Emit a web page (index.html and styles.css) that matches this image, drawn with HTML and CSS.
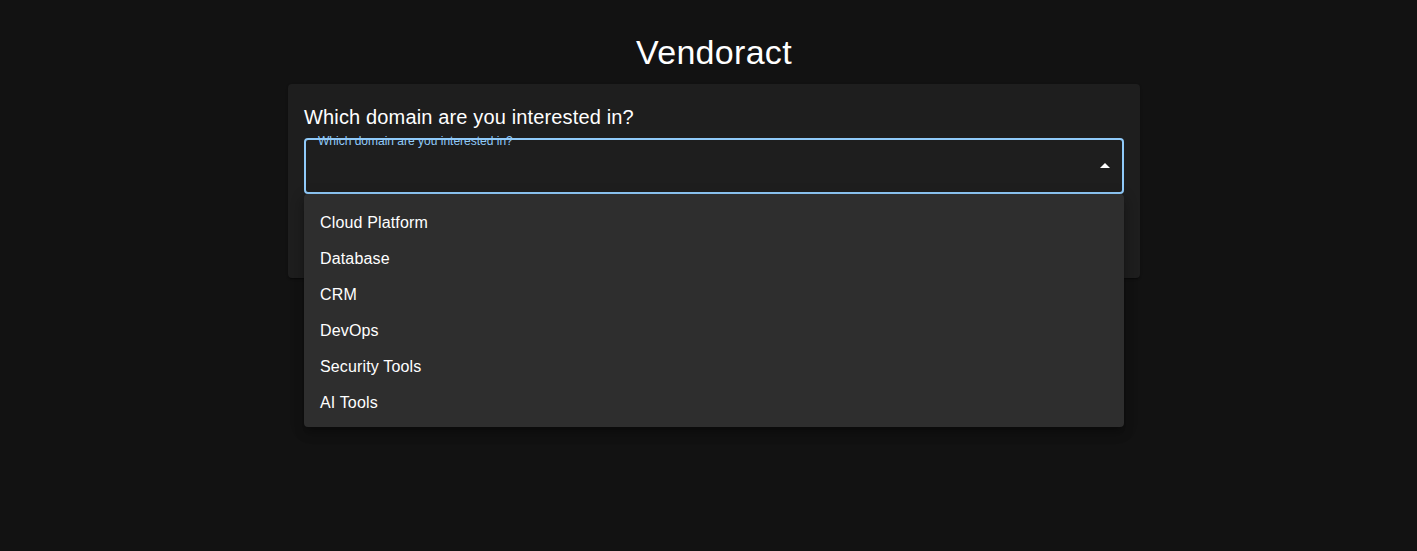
FILE: index.html
```html
<!DOCTYPE html>
<html>
<head>
<meta charset="utf-8">
<link rel="stylesheet" href="styles.css">
</head>
<body>
<div class="page">
  <h1 class="title">Vendoract</h1>
  <div class="card">
    <h2 class="question">Which domain are you interested in?</h2>
    <div class="field">
      <span class="label">Which domain are you interested in?</span>
      <svg class="arrow" width="10" height="5" viewBox="0 0 10 5"><path d="M0 5 L5 0 L10 5 Z" fill="#ffffff"/></svg>
      <ul class="menu">
        <li>Cloud Platform</li>
        <li>Database</li>
        <li>CRM</li>
        <li>DevOps</li>
        <li>Security Tools</li>
        <li>AI Tools</li>
      </ul>
    </div>
  </div>
</div>
</body>
</html>
```
FILE: styles.css
```css
html, body {
  margin: 0;
  padding: 0;
  background: #121212;
  height: 100%;
}
body {
  font-family: "Liberation Sans", Arial, sans-serif;
  color: #ffffff;
}
.page {
  display: flex;
  flex-direction: column;
  align-items: center;
  padding-top: 32px;
  padding-left: 11px;
}
.title {
  margin: 0;
  font-size: 34px;
  font-weight: 400;
  line-height: 40px;
  height: 52px;
  letter-spacing: 0.3px;
}
.card {
  box-sizing: border-box;
  width: 852px;
  height: 194px;
  background: #1e1e1e;
  border-radius: 4px;
  padding: 16px;
  box-shadow: 0 2px 1px -1px rgba(0,0,0,0.2), 0 1px 1px 0 rgba(0,0,0,0.14), 0 1px 3px 0 rgba(0,0,0,0.12);
}
.question {
  margin: 0;
  padding-top: 1px;
  font-size: 20px;
  font-weight: 400;
  line-height: 32px;
  height: 37px;
  letter-spacing: 0.15px;
}
.field {
  position: relative;
  box-sizing: border-box;
  height: 56px;
  border: 2px solid #90caf9;
  border-radius: 4px;
}
.label {
  position: absolute;
  left: 12px;
  top: -6px;
  font-size: 12px;
  line-height: 14px;
  color: #90caf9;
}
.arrow {
  position: absolute;
  right: 12px;
  top: 23px;
}
.menu {
  position: absolute;
  left: -2px;
  right: -2px;
  top: 54px;
  margin: 0;
  padding: 11px 0 6px;
  list-style: none;
  background: #2e2e2e;
  border-radius: 4px;
  box-shadow: 0 5px 5px -3px rgba(0,0,0,0.2), 0 8px 10px 1px rgba(0,0,0,0.14), 0 3px 14px 2px rgba(0,0,0,0.12);
  z-index: 2;
}
.menu li {
  height: 36px;
  line-height: 36px;
  padding: 0 16px;
  font-size: 16px;
  letter-spacing: 0.15px;
}
```
